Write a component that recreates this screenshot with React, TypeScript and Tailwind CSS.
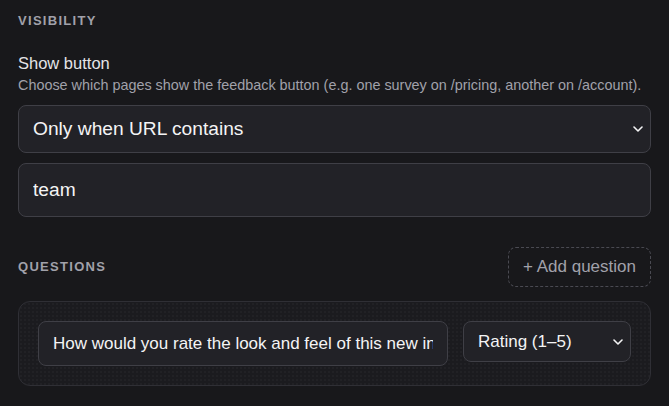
import { useState } from "react"

const font = { fontFamily: '"Liberation Sans", Arial, sans-serif' }

function Chevron({ className }: { className?: string }) {
  return (
    <svg
      className={className}
      width="10"
      height="6"
      viewBox="0 0 10 6"
      fill="none"
      stroke="currentColor"
      strokeWidth="1.6"
      strokeLinecap="round"
      strokeLinejoin="round"
    >
      <path d="M1 1l4 4 4-4" />
    </svg>
  )
}

export default function App() {
  const [mode, setMode] = useState("contains")
  const [match, setMatch] = useState("team")
  const [question, setQuestion] = useState(
    "How would you rate the look and feel of this new interface?"
  )
  const [kind, setKind] = useState("rating")

  return (
    <div className="min-h-screen bg-[#18181b] px-[18px] pt-[13px] text-[#f4f4f5]" style={font}>
      {/* Visibility */}
      <h3 className="text-[13px] leading-4 font-bold uppercase tracking-[0.1em] text-[#a1a1aa]">
        Visibility
      </h3>

      <div className="mt-6">
        <label className="block text-[16.5px] leading-5 text-[#e4e4e7]">Show button</label>
        <p className="mt-[3px] text-[14.4px] leading-[19px] text-[#a1a1aa]">
          Choose which pages show the feedback button (e.g. one survey on /pricing, another on
          /account).
        </p>

        <div className="relative mt-[10px]">
          <select
            value={mode}
            onChange={(e) => setMode(e.target.value)}
            className="h-[48px] w-full appearance-none rounded-lg border border-[#3f3f46] bg-[#222227] px-[14px] text-[19.2px] text-[#f4f4f5] outline-none"
          >
            <option value="all">All pages</option>
            <option value="contains">Only when URL contains</option>
            <option value="none">Never</option>
          </select>
          <Chevron className="pointer-events-none absolute right-[8px] top-1/2 -translate-y-1/2 text-[#f4f4f5]" />
        </div>

        <input
          value={match}
          onChange={(e) => setMatch(e.target.value)}
          className="mt-[10px] block h-[54px] w-full rounded-lg border border-[#3f3f46] bg-[#222227] px-[14px] text-[19.2px] text-[#f4f4f5] outline-none"
        />
      </div>

      {/* Questions */}
      <div className="mt-[30px] flex h-[40px] items-center justify-between">
        <h3 className="text-[13px] leading-4 font-bold uppercase tracking-[0.1em] text-[#a1a1aa]">
          Questions
        </h3>
        <button className="h-[40px] rounded-lg border border-dashed border-[#4a4a52] px-[14px] text-[17px] text-[#a1a1aa]">
          + Add question
        </button>
      </div>

      <div className="mt-[14px] flex items-start gap-[15px] rounded-xl border border-[#2f2f35] bg-[#1b1b1f] bg-[radial-gradient(circle,rgba(255,255,255,0.03)_0.7px,transparent_0.8px)] bg-[length:4px_4px] p-[19px]">
        <input
          value={question}
          onChange={(e) => setQuestion(e.target.value)}
          className="h-[45px] min-w-0 flex-1 rounded-lg border border-[#3f3f46] bg-[#222227] px-[14px] text-[17px] text-[#f4f4f5] outline-none"
        />
        <div className="relative w-[168px] shrink-0">
          <select
            value={kind}
            onChange={(e) => setKind(e.target.value)}
            className="h-[41px] w-full appearance-none rounded-lg border border-[#3f3f46] bg-[#222227] px-[14px] text-[17px] text-[#f4f4f5] outline-none"
          >
            <option value="rating">Rating (1–5)</option>
            <option value="text">Free text</option>
            <option value="choice">Multiple choice</option>
          </select>
          <Chevron className="pointer-events-none absolute right-[8px] top-1/2 -translate-y-1/2 text-[#f4f4f5]" />
        </div>
      </div>
    </div>
  )
}
